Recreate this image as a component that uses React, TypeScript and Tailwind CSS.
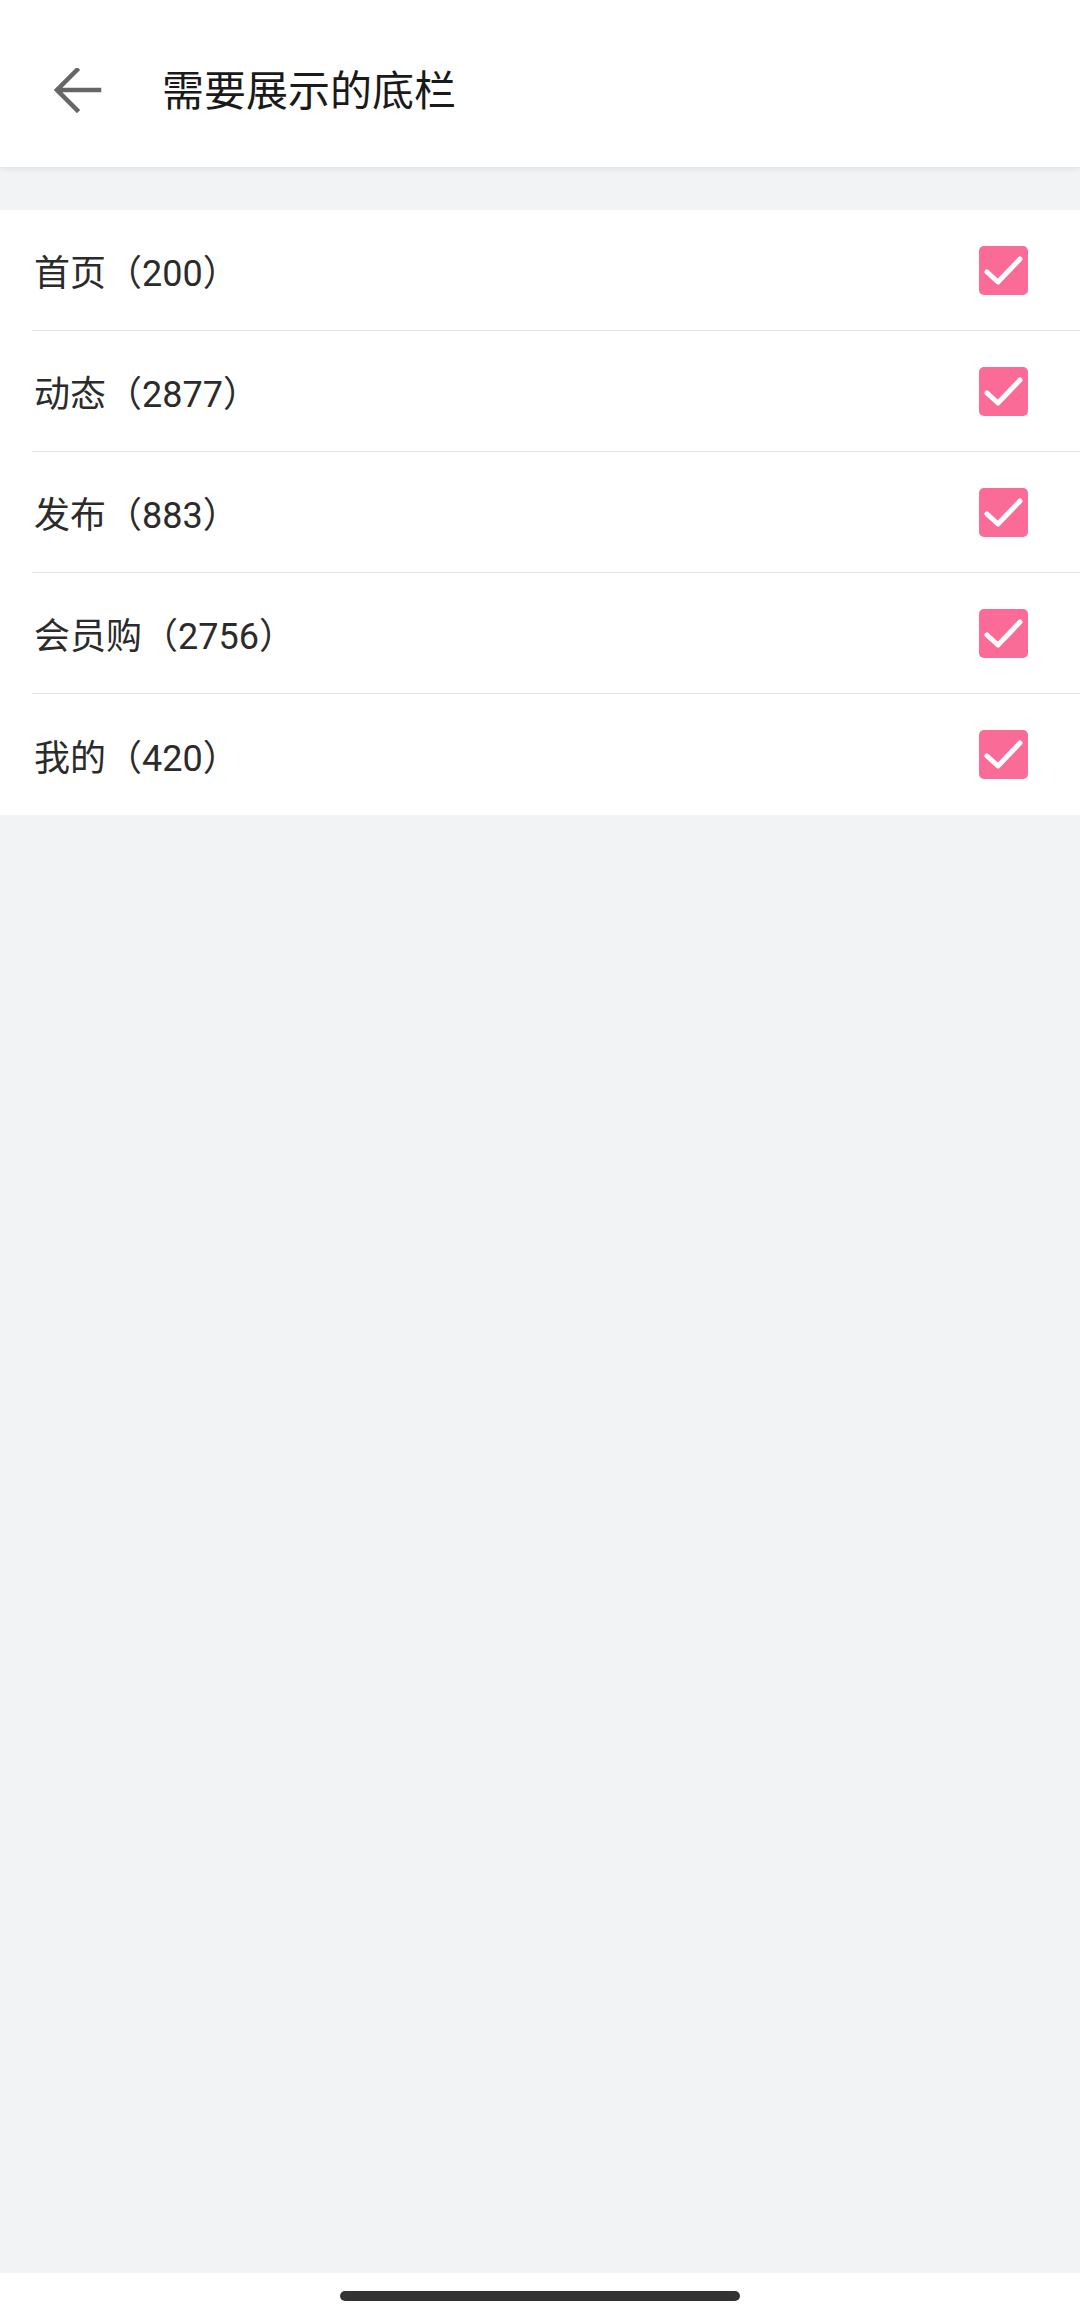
const items = [
  { name: "首页", count: 200 },
  { name: "动态", count: 2877 },
  { name: "发布", count: 883 },
  { name: "会员购", count: 2756 },
  { name: "我的", count: 420 },
];

function CheckBox() {
  return (
    <div className="w-[49px] h-[49px] rounded-[5px] bg-[#fb6b97] flex items-center justify-center">
      <svg width="49" height="49" viewBox="0 0 49 49" fill="none">
        <path d="M8 26L19 36L41 13" stroke="#fff" strokeWidth="5" strokeLinecap="round" strokeLinejoin="round" />
      </svg>
    </div>
  );
}

export default function App() {
  return (
    <div
      className="w-[1080px] h-[2318px] flex flex-col bg-[#f2f3f5] text-[#222]"
      style={{ fontFamily: 'Roboto, "Noto Sans CJK SC", sans-serif' }}
    >
      {/* Header */}
      <header className="h-[167px] pt-[16px] bg-white flex items-center shrink-0 shadow-[0_2px_6px_rgba(0,0,0,0.08)] relative z-10">
        <div className="w-[162px] pl-[54px] flex items-center">
          <svg width="48" height="48" viewBox="0 0 48 48" fill="none">
            <path d="M45 22H4M23 2L3 22L23 42" stroke="#666" strokeWidth="4.5" strokeLinecap="square" />
          </svg>
        </div>
        <h1 className="text-[42px] leading-none text-[#1a1a1a]">需要展示的底栏</h1>
      </header>

      {/* List */}
      <div className="mt-[43px] bg-white">
        {items.map((it, i) => (
          <div key={it.name} className="pl-[32px]">
            <div
              className={
                "h-[121px] flex items-center justify-between pr-[52px] " +
                (i < items.length - 1 ? "border-b border-[#e6e6e6]" : "")
              }
            >
              <span className="text-[36px] text-[#2b2b2b] pl-[2px] pt-[8px]">
                {it.name}（{it.count}）
              </span>
              <CheckBox />
            </div>
          </div>
        ))}
      </div>

      <div className="flex-1" />

      {/* Gesture bar */}
      <div className="h-[45px] bg-white flex items-center justify-center shrink-0">
        <div className="w-[400px] h-[10px] rounded-full bg-[#333]" />
      </div>
    </div>
  );
}
